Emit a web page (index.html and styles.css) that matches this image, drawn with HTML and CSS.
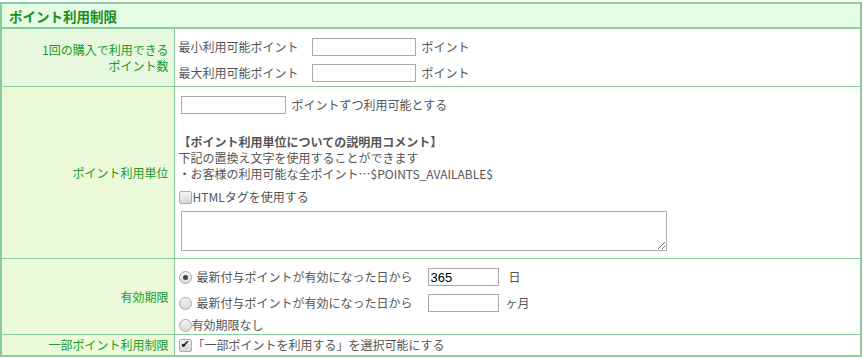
FILE: index.html
```html
<!doctype html>
<html lang="ja">
<head>
    <meta charset="UTF-8">
    <title>ポイント利用制限</title>
    <link rel="stylesheet" href="styles.css">
</head>
<body>
    <table class="form-table">
        <tr>
            <th class="caption" colspan="2">ポイント利用制限</th>
        </tr>
        <tr>
            <th class="label label-gray">1回の購入で利用できる<br>ポイント数</th>
            <td class="value pad-limit">
                <div class="line">最小利用可能ポイント<input type="text" class="num"><span class="unit">ポイント</span></div>
                <div class="line">最大利用可能ポイント<input type="text" class="num"><span class="unit">ポイント</span></div>
            </td>
        </tr>
        <tr>
            <th class="label">ポイント利用単位</th>
            <td class="value pad-unit">
                <div class="line first"><input type="text" class="num step"><span class="unit">ポイントずつ利用可能とする</span></div>
                <div class="spacer"></div>
                <div class="note-title">【ポイント利用単位についての説明用コメント】</div>
                <div class="note">下記の置換え文字を使用することができます</div>
                <div class="note">・お客様の利用可能な全ポイント…$POINTS_AVAILABLE$</div>
                <label class="check-line"><input type="checkbox" class="box">HTMLタグを使用する</label>
                <textarea class="comment"></textarea>
            </td>
        </tr>
        <tr>
            <th class="label">有効期限</th>
            <td class="value pad-expire">
                <div class="line radio-line r1"><input type="radio" name="expire" class="dot" checked><span class="radio-text">最新付与ポイントが有効になった日から</span><input type="text" class="days" value="365"><span class="after-day">日</span></div>
                <div class="line radio-line r2"><input type="radio" name="expire" class="dot"><span class="radio-text">最新付与ポイントが有効になった日から</span><input type="text" class="days"><span class="after-month">ヶ月</span></div>
                <label class="line r3"><input type="radio" name="expire" class="dot">有効期限なし</label>
            </td>
        </tr>
        <tr>
            <th class="label">一部ポイント利用制限</th>
            <td class="value pad-partial">
                <label class="partial"><input type="checkbox" class="box" checked>「一部ポイントを利用する」を選択可能にする</label>
            </td>
        </tr>
    </table>
</body>
</html>
```

FILE: styles.css
```css
body {
    margin: 2px 0 0 0;
    font-family: "Noto Sans CJK JP", "Noto Sans", sans-serif;
    font-size: 12px;
    color: #555;
    background: #fff;
}
.form-table {
    border-collapse: collapse;
    width: 862px;
    border: 2px solid #88cc9f;
}
.caption {
    background: #e5fde5;
    color: #1c8c1c;
    font-size: 13.5px;
    font-weight: bold;
    text-align: left;
    line-height: 16px;
    height: 25px;
    padding: 0 7px;
    border-bottom: 2px solid #88cc9f;
    box-sizing: border-box;
}
.label {
    width: 173px;
    box-sizing: border-box;
    padding: 0 5px 0 0;
    text-align: right;
    font-weight: normal;
    color: #169a2c;
    line-height: 16px;
    vertical-align: middle;
    border: 1px solid #88cc9f;
    background: repeating-conic-gradient(#dcf4c0 0 25%, #fbfff4 0 50%) 0 0 / 2px 2px;
}
.label-gray {
    background: repeating-conic-gradient(#dff0d6 0 25%, #f7faf2 0 50%) 0 0 / 2px 2px;
}
.value {
    border: 1px solid #88cc9f;
    padding: 0 0 0 4px;
    line-height: 16px;
    vertical-align: top;
}
.line {
    display: flex;
    align-items: center;
    height: 26px;
    white-space: nowrap;
}
input[type="text"] {
    box-sizing: border-box;
    height: 18px;
    border: 1px solid #a9a9a9;
    padding: 0 2px;
    font-family: "Liberation Sans", sans-serif;
    font-size: 13px;
    color: #000;
    margin: 0;
    outline: none;
}
.num {
    width: 104px;
    margin-left: 13px !important;
}
.step {
    width: 105px;
    margin-left: 2px !important;
}
.unit {
    margin-left: 6px;
}
.pad-limit {
    padding-top: 5px;
}
.pad-unit {
    padding-top: 5px;
    padding-bottom: 7px;
}
.spacer {
    height: 16px;
}
.note-title {
    font-weight: bold;
    color: #555;
}
.check-line {
    display: flex;
    align-items: center;
    margin-top: 7px;
}
.comment {
    display: block;
    box-sizing: border-box;
    width: 486px;
    height: 40px;
    margin: 6px 0 0 2px;
    border: 1px solid #a9a9a9;
    resize: vertical;
}
.pad-expire {
    padding-top: 4px;
    padding-bottom: 1px;
}
.r1 {
    height: 28px;
}
.r2 {
    height: 26px;
    padding-bottom: 2px;
    box-sizing: border-box;
}
.r3 {
    height: 16px;
}
.radio-text {
    margin-left: 5px;
}
.days {
    width: 71px;
    margin-left: 15px !important;
}
.after-day {
    margin-left: 10px;
}
.after-month {
    margin-left: 7px;
}
.pad-partial {
    padding-top: 2px;
    padding-bottom: 2px;
}
.partial {
    display: flex;
    align-items: center;
}
.dot,
.box {
    appearance: none;
    -webkit-appearance: none;
    width: 13px;
    height: 13px;
    margin: 0;
    border: 1px solid #aaa;
    background: linear-gradient(#f4f4f4, #d8d8d8);
    box-sizing: border-box;
    position: relative;
    flex: none;
}
.dot {
    border-radius: 50%;
}
.dot:checked::after {
    content: '';
    position: absolute;
    width: 5px;
    height: 5px;
    border-radius: 50%;
    background: #444;
    top: 3px;
    left: 3px;
}
.box {
    border-radius: 2px;
    margin-right: 1px;
}
.box:checked::after {
    content: '✔';
    position: absolute;
    top: -3px;
    left: 1px;
    font-size: 11px;
    line-height: 16px;
    color: #222;
    font-family: "DejaVu Sans", sans-serif;
}
```
